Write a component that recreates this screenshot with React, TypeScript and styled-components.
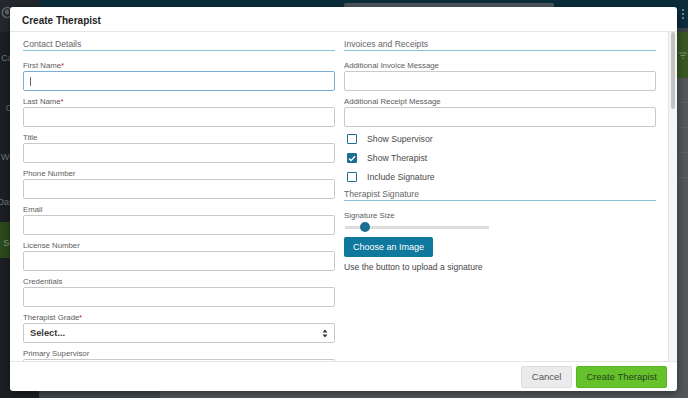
import React from "react";
import styled, { createGlobalStyle } from "styled-components";

const GlobalStyle = createGlobalStyle`
  html, body { margin: 0; padding: 0; }
  body { font-family: "Liberation Sans", Arial, Helvetica, sans-serif; background: #1c2024; }
  * { box-sizing: border-box; }
`;

const Page = styled.div`
  position: relative;
  width: 688px;
  height: 398px;
  overflow: hidden;
  display: flex;
  background: #53575a;
`;

/* ---------- dimmed application behind the modal ---------- */
const Sidebar = styled.nav`
  width: 39px;
  flex: none;
  display: flex;
  flex-direction: column;
  background: #1c2024;
`;

const SideLogo = styled.div`
  height: 32px;
  flex: none;
  background: #24282c;
  padding: 5px 0 0 1px;
`;

const SideItem = styled.div<{ $h: number; $active?: boolean }>`
  height: ${(p) => p.$h}px;
  flex: none;
  display: flex;
  align-items: center;
  justify-content: center;
  overflow: hidden;
  white-space: nowrap;
  font-size: 9px;
  color: ${(p) => (p.$active ? "#8a9a80" : "#73777b")};
  background: ${(p) => (p.$active ? "#2c4a1d" : "transparent")};
  padding-top: ${(p) => (p.$active ? 6 : 0)}px;
`;

const Main = styled.div`
  flex: 1;
  display: flex;
  flex-direction: column;
`;

const TopBar = styled.div`
  height: 28px;
  flex: none;
  background: #0b2d3c;
  display: flex;
  align-items: flex-start;
  justify-content: space-between;
  padding-right: 4px;
`;

const SearchBox = styled.div`
  margin: 3px 0 0 305px;
  width: 210px;
  height: 10px;
  background: #4d585d;
  border-radius: 2px;
`;

const Kebab = styled.div`
  margin-top: 9px;
  display: flex;
  flex-direction: column;
  gap: 2px;
  & > span {
    width: 2px;
    height: 2px;
    background: #6f8188;
  }
`;

const Gap = styled.div`
  height: 4px;
  flex: none;
  background: #3e4246;
`;

const GreenBand = styled.div`
  height: 46px;
  flex: none;
  background: #395922;
  display: flex;
  align-items: center;
  justify-content: flex-end;
  padding-right: 1px;
`;

const MainBody = styled.div`
  flex: 1;
  display: flex;
`;

const LeftPane = styled.div`
  width: 121px;
  background: #45494c;
`;

const RightPane = styled.div`
  flex: 1;
  background: #53575a;
  display: flex;
  flex-direction: column;
`;

const PaneRow = styled.div`
  height: 25px;
  flex: none;
  border-bottom: 1px solid #5c6063;
`;

/* ---------- modal ---------- */
const Modal = styled.div`
  position: absolute;
  left: 10px;
  top: 7px;
  width: 667px;
  height: 384px;
  background: #fff;
  border-radius: 3px;
  box-shadow: 0 2px 10px rgba(0, 0, 0, 0.45);
  display: flex;
  flex-direction: column;
  overflow: hidden;
`;

const ModalHeader = styled.header`
  height: 25px;
  flex: none;
  display: flex;
  align-items: center;
  padding: 2px 0 0 12px;
  border-bottom: 1px solid #e6e6e6;
  font-size: 10px;
  font-weight: 700;
  color: #1e1e1e;
`;

const ModalBody = styled.div`
  flex: 1;
  display: flex;
  min-height: 0;
`;

const Content = styled.div`
  flex: 1;
  overflow: hidden;
  border-right: 1px solid #e3e3e3;
  padding: 6px 12px 0 13px;
`;

const ScrollTrack = styled.div`
  width: 8px;
  flex: none;
  background: #f5f5f5;
  padding: 0 2px;
`;

const ScrollThumb = styled.div`
  height: 77px;
  border-radius: 2px;
  background: #c3c3c3;
`;

const Columns = styled.div`
  display: grid;
  grid-template-columns: 312px 312px;
  column-gap: 9px;
  align-items: start;
`;

const Column = styled.div`
  display: flex;
  flex-direction: column;
`;

const SectionTitle = styled.div<{ $mt?: number }>`
  margin-top: ${(p) => p.$mt ?? 0}px;
  font-size: 8.6px;
  line-height: 12px;
  color: #666;
  border-bottom: 1px solid #86c3d5;
  margin-bottom: 9px;
`;

const Field = styled.div`
  display: flex;
  flex-direction: column;
  margin-bottom: 5px;
`;

const Label = styled.label`
  font-size: 7.8px;
  line-height: 12px;
  height: 10px;
  color: #5c5c5c;
  margin-bottom: 1px;
  white-space: nowrap;
`;

const Req = styled.span`
  color: #d0021b;
  font-size: 7px;
  vertical-align: top;
`;

const InputWrap = styled.div`
  position: relative;
  height: 20px;
`;

const TextInput = styled.input<{ $focused?: boolean }>`
  display: block;
  width: 100%;
  height: 20px;
  margin: 0;
  padding: 0 6px;
  border: 1px solid ${(p) => (p.$focused ? "#7aaed7" : "#c9c9c9")};
  border-radius: 2px;
  background: #fff;
  outline: none;
  font-family: inherit;
  font-size: 9px;
`;

const Caret = styled.span`
  position: absolute;
  left: 7px;
  top: 6px;
  width: 1px;
  height: 9px;
  background: #6a6a6a;
`;

const SelectBox = styled.div`
  height: 20px;
  border: 1px solid #c9c9c9;
  border-radius: 2px;
  display: flex;
  align-items: center;
  justify-content: space-between;
  padding: 0 6px;
  font-size: 9.3px;
  font-weight: 700;
  color: #3a3a3a;
`;

const CutInput = styled.div`
  height: 2px;
  border: 1px solid #c9c9c9;
  border-bottom: none;
  border-radius: 2px 2px 0 0;
`;

const CheckList = styled.div`
  display: flex;
  flex-direction: column;
  gap: 5px;
`;

const CheckRow = styled.div`
  height: 14px;
  display: flex;
  align-items: center;
  gap: 10px;
  padding-left: 3px;
  font-size: 8.7px;
  color: #4a4a4a;
`;

const Box = styled.span<{ $checked?: boolean }>`
  width: 10px;
  height: 10px;
  flex: none;
  border: 1.5px solid #1d6f92;
  border-radius: 1px;
  background: ${(p) => (p.$checked ? "#1d6f92" : "#fff")};
  display: flex;
  align-items: center;
  justify-content: center;
`;

const SmallLabel = styled.div`
  font-size: 7.8px;
  line-height: 11px;
  height: 10px;
  color: #5c5c5c;
`;

const Slider = styled.div`
  margin: 2px 0 0 1px;
  width: 144px;
  height: 10px;
  display: flex;
  align-items: center;
  background: linear-gradient(#dcdcdc, #dcdcdc) center / 100% 3px no-repeat;
`;

const Thumb = styled.span`
  width: 10px;
  height: 10px;
  margin-left: 15px;
  border-radius: 50%;
  background: #1a6f91;
`;

const PrimaryButton = styled.button`
  align-self: flex-start;
  margin-top: 5px;
  height: 20px;
  padding: 0 9px;
  border: none;
  border-radius: 2px;
  background: #10789c;
  color: #fff;
  font-family: inherit;
  font-size: 9px;
`;

const Helper = styled.div`
  margin-top: 4px;
  font-size: 8.6px;
  line-height: 12px;
  color: #474747;
`;

const ModalFooter = styled.footer`
  height: 30px;
  flex: none;
  border-top: 1px solid #e5e5e5;
  display: flex;
  align-items: center;
  justify-content: flex-end;
  gap: 4px;
  padding-right: 10px;
`;

const FooterButton = styled.button<{ $variant: "default" | "success" }>`
  height: 22px;
  padding: 0 ${(p) => (p.$variant === "success" ? 9 : 10)}px;
  border-radius: 2px;
  font-family: inherit;
  font-size: 9.5px;
  border: 1px solid ${(p) => (p.$variant === "success" ? "#5ab323" : "#dddddd")};
  background: ${(p) => (p.$variant === "success" ? "#65c22a" : "#ebebeb")};
  color: ${(p) => (p.$variant === "success" ? "#2b431f" : "#555")};
`;

const contactFields: { label: string; required?: boolean }[] = [
  { label: "First Name", required: true },
  { label: "Last Name", required: true },
  { label: "Title" },
  { label: "Phone Number" },
  { label: "Email" },
  { label: "License Number" },
  { label: "Credentials" },
];

const checks = [
  { label: "Show Supervisor", checked: false },
  { label: "Show Therapist", checked: true },
  { label: "Include Signature", checked: false },
];

export default function App() {
  return (
    <>
      <GlobalStyle />
      <Page>
        <Sidebar>
          <SideLogo>
            <svg width="12" height="13" viewBox="0 0 12 13">
              <path d="M10 3.2A5 5 0 1 0 10 9.8" fill="none" stroke="#5f6467" strokeWidth="1.6" />
              <path d="M4 4.5l2-1.5 2 1.5v3L6 9 4 7.5z" fill="#5f6467" />
            </svg>
          </SideLogo>
          <SideItem $h={51}>Calendar</SideItem>
          <SideItem $h={49}>Clients</SideItem>
          <SideItem $h={50}>Workflow</SideItem>
          <SideItem $h={40}>Dashboard</SideItem>
          <SideItem $h={36} $active>
            Settings
          </SideItem>
        </Sidebar>
        <Main>
          <TopBar>
            <SearchBox />
            <Kebab>
              <span />
              <span />
              <span />
            </Kebab>
          </TopBar>
          <Gap />
          <GreenBand>
            <svg width="8" height="7" viewBox="0 0 8 7">
              <path d="M0 1h8M1.5 3.5h5M3 6h2" stroke="#7c8f70" strokeWidth="1" />
            </svg>
          </GreenBand>
          <MainBody>
            <LeftPane />
            <RightPane>
              <PaneRow />
              <PaneRow />
              <PaneRow />
              <PaneRow />
            </RightPane>
          </MainBody>
        </Main>

        <Modal>
          <ModalHeader>Create Therapist</ModalHeader>
          <ModalBody>
            <Content>
              <Columns>
                <Column>
                  <SectionTitle>Contact Details</SectionTitle>
                  {contactFields.map((f, i) => (
                    <Field key={f.label}>
                      <Label>
                        {f.label}
                        {f.required && <Req>*</Req>}
                      </Label>
                      <InputWrap>
                        <TextInput $focused={i === 0} readOnly />
                        {i === 0 && <Caret />}
                      </InputWrap>
                    </Field>
                  ))}
                  <Field>
                    <Label>
                      Therapist Grade<Req>*</Req>
                    </Label>
                    <SelectBox>
                      <span>Select...</span>
                      <svg width="6" height="9" viewBox="0 0 6 9">
                        <path d="M3 0.5L5.5 3.5H0.5z M3 8.5L0.5 5.5H5.5z" fill="#333" />
                      </svg>
                    </SelectBox>
                  </Field>
                  <Field>
                    <Label>Primary Supervisor</Label>
                    <CutInput />
                  </Field>
                </Column>

                <Column>
                  <SectionTitle>Invoices and Receipts</SectionTitle>
                  <Field>
                    <Label>Additional Invoice Message</Label>
                    <TextInput readOnly />
                  </Field>
                  <Field>
                    <Label>Additional Receipt Message</Label>
                    <TextInput readOnly />
                  </Field>
                  <CheckList>
                    {checks.map((c) => (
                      <CheckRow key={c.label}>
                        <Box $checked={c.checked}>
                          {c.checked && (
                            <svg width="8" height="7" viewBox="0 0 8 7">
                              <path d="M1 3.6l2 2L7 1.2" fill="none" stroke="#fff" strokeWidth="1.4" />
                            </svg>
                          )}
                        </Box>
                        {c.label}
                      </CheckRow>
                    ))}
                  </CheckList>
                  <SectionTitle $mt={4}>Therapist Signature</SectionTitle>
                  <SmallLabel>Signature Size</SmallLabel>
                  <Slider>
                    <Thumb />
                  </Slider>
                  <PrimaryButton>Choose an Image</PrimaryButton>
                  <Helper>Use the button to upload a signature</Helper>
                </Column>
              </Columns>
            </Content>
            <ScrollTrack>
              <ScrollThumb />
            </ScrollTrack>
          </ModalBody>
          <ModalFooter>
            <FooterButton $variant="default">Cancel</FooterButton>
            <FooterButton $variant="success">Create Therapist</FooterButton>
          </ModalFooter>
        </Modal>
      </Page>
    </>
  );
}
